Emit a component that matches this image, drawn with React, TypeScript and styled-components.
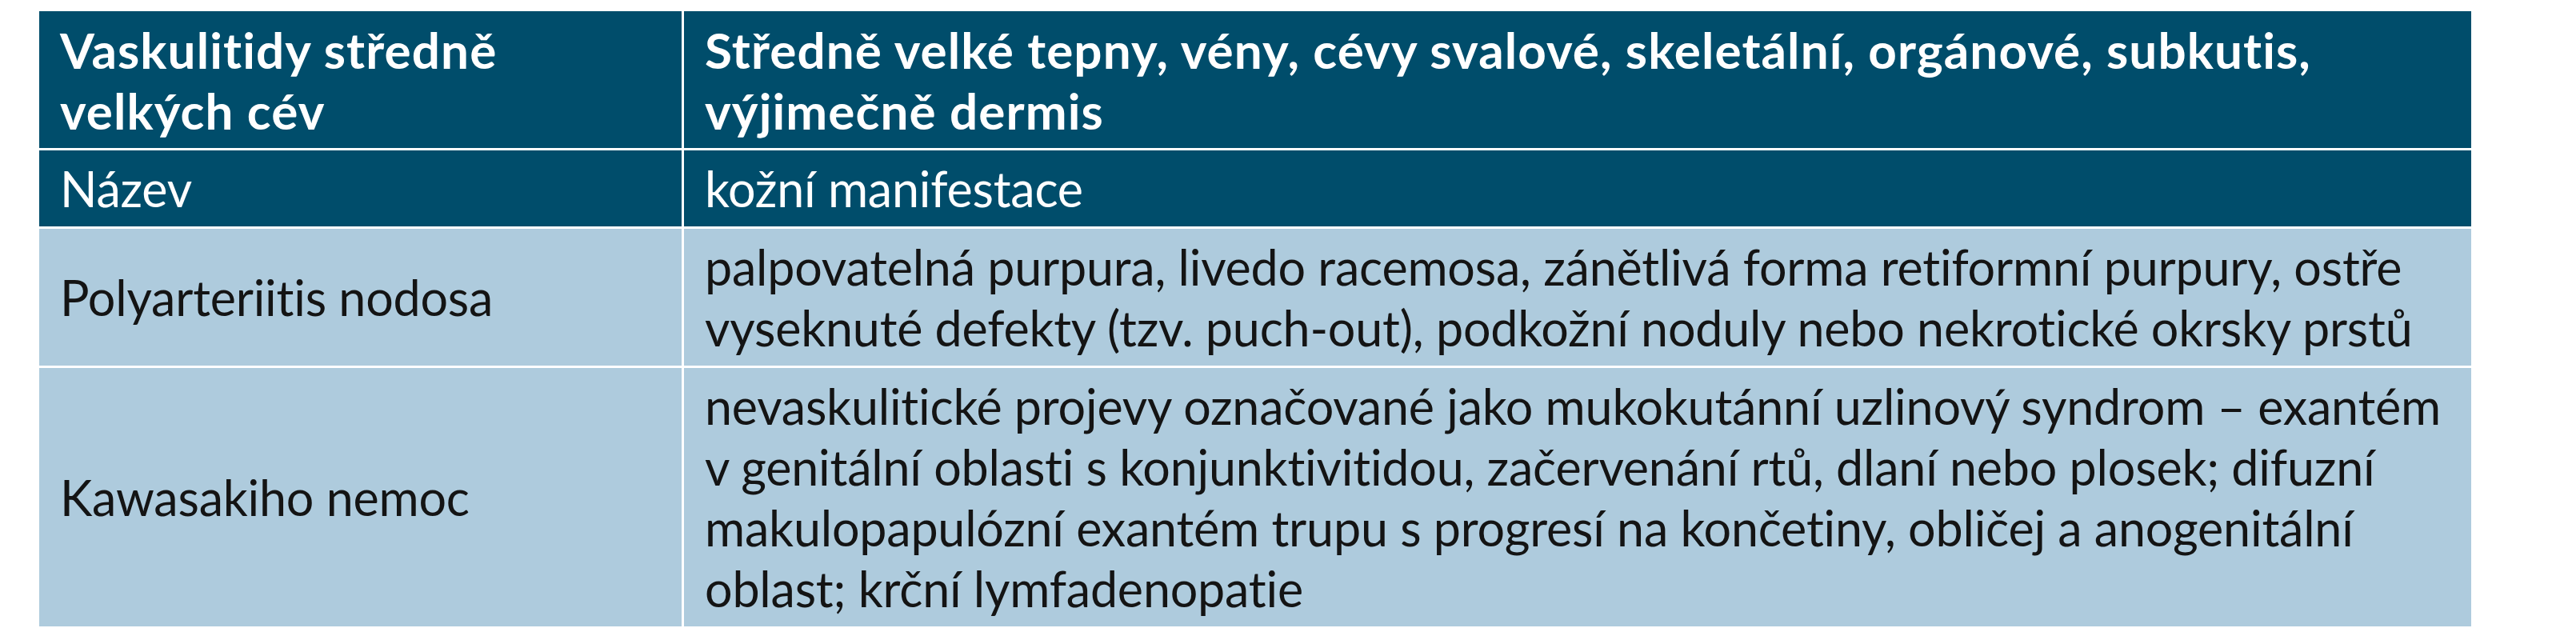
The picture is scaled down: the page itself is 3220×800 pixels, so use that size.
import React from "react";
import styled, { createGlobalStyle } from "styled-components";

const GlobalStyle = createGlobalStyle`
  html, body { margin: 0; padding: 0; background: #ffffff; }
  body { font-family: "Lato", "Open Sans", sans-serif; }
`;

const Page = styled.div`
  padding: 14px 0 0 49px;
`;

const Table = styled.div`
  display: grid;
  grid-template-columns: 803px 2234px;
  gap: 3px;
  width: 3040px;
  background: #ffffff;
`;

type Tone = "head" | "sub" | "body";

const Cell = styled.div<{ $tone: Tone; $center?: boolean }>`
  display: flex;
  flex-direction: column;
  justify-content: ${(p) => (p.$center ? "center" : "flex-start")};
  padding: 10px 20px 9px 26px;
  background: ${(p) => (p.$tone === "body" ? "#aecbdd" : "#004d6b")};
  color: ${(p) => (p.$tone === "body" ? "#141414" : "#ffffff")};
  font-family: "Lato", "Open Sans", sans-serif;
  font-size: ${(p) => (p.$tone === "head" ? "62px" : "61px")};
  font-weight: ${(p) => (p.$tone === "head" ? 700 : 400)};
  letter-spacing: ${(p) => (p.$tone === "head" ? "1.1px" : "-0.2px")};
  line-height: 76px;
`;

const Line = styled.span`
  display: block;
  white-space: nowrap;
`;

type Row = { tone: Tone; name: string[]; desc: string[] };

const rows: Row[] = [
  {
    tone: "head",
    name: ["Vaskulitidy středně", "velkých cév"],
    desc: [
      "Středně velké tepny, vény, cévy svalové, skeletální, orgánové, subkutis,",
      "výjimečně dermis",
    ],
  },
  { tone: "sub", name: ["Název"], desc: ["kožní manifestace"] },
  {
    tone: "body",
    name: ["Polyarteriitis nodosa"],
    desc: [
      "palpovatelná purpura, livedo racemosa, zánětlivá forma retiformní purpury, ostře",
      "vyseknuté defekty (tzv. puch-out), podkožní noduly nebo nekrotické okrsky prstů",
    ],
  },
  {
    tone: "body",
    name: ["Kawasakiho nemoc"],
    desc: [
      "nevaskulitické projevy označované jako mukokutánní uzlinový syndrom – exantém",
      "v genitální oblasti s konjunktivitidou, začervenání rtů, dlaní nebo plosek; difuzní",
      "makulopapulózní exantém trupu s progresí na končetiny, obličej a anogenitální",
      "oblast; krční lymfadenopatie",
    ],
  },
];

export default function App() {
  return (
    <>
      <GlobalStyle />
      <Page>
        <Table>
          {rows.map((r, i) => (
            <React.Fragment key={i}>
              <Cell $tone={r.tone} $center>
                {r.name.map((l, j) => (
                  <Line key={j}>{l}</Line>
                ))}
              </Cell>
              <Cell $tone={r.tone}>
                {r.desc.map((l, j) => (
                  <Line key={j}>{l}</Line>
                ))}
              </Cell>
            </React.Fragment>
          ))}
        </Table>
      </Page>
    </>
  );
}
